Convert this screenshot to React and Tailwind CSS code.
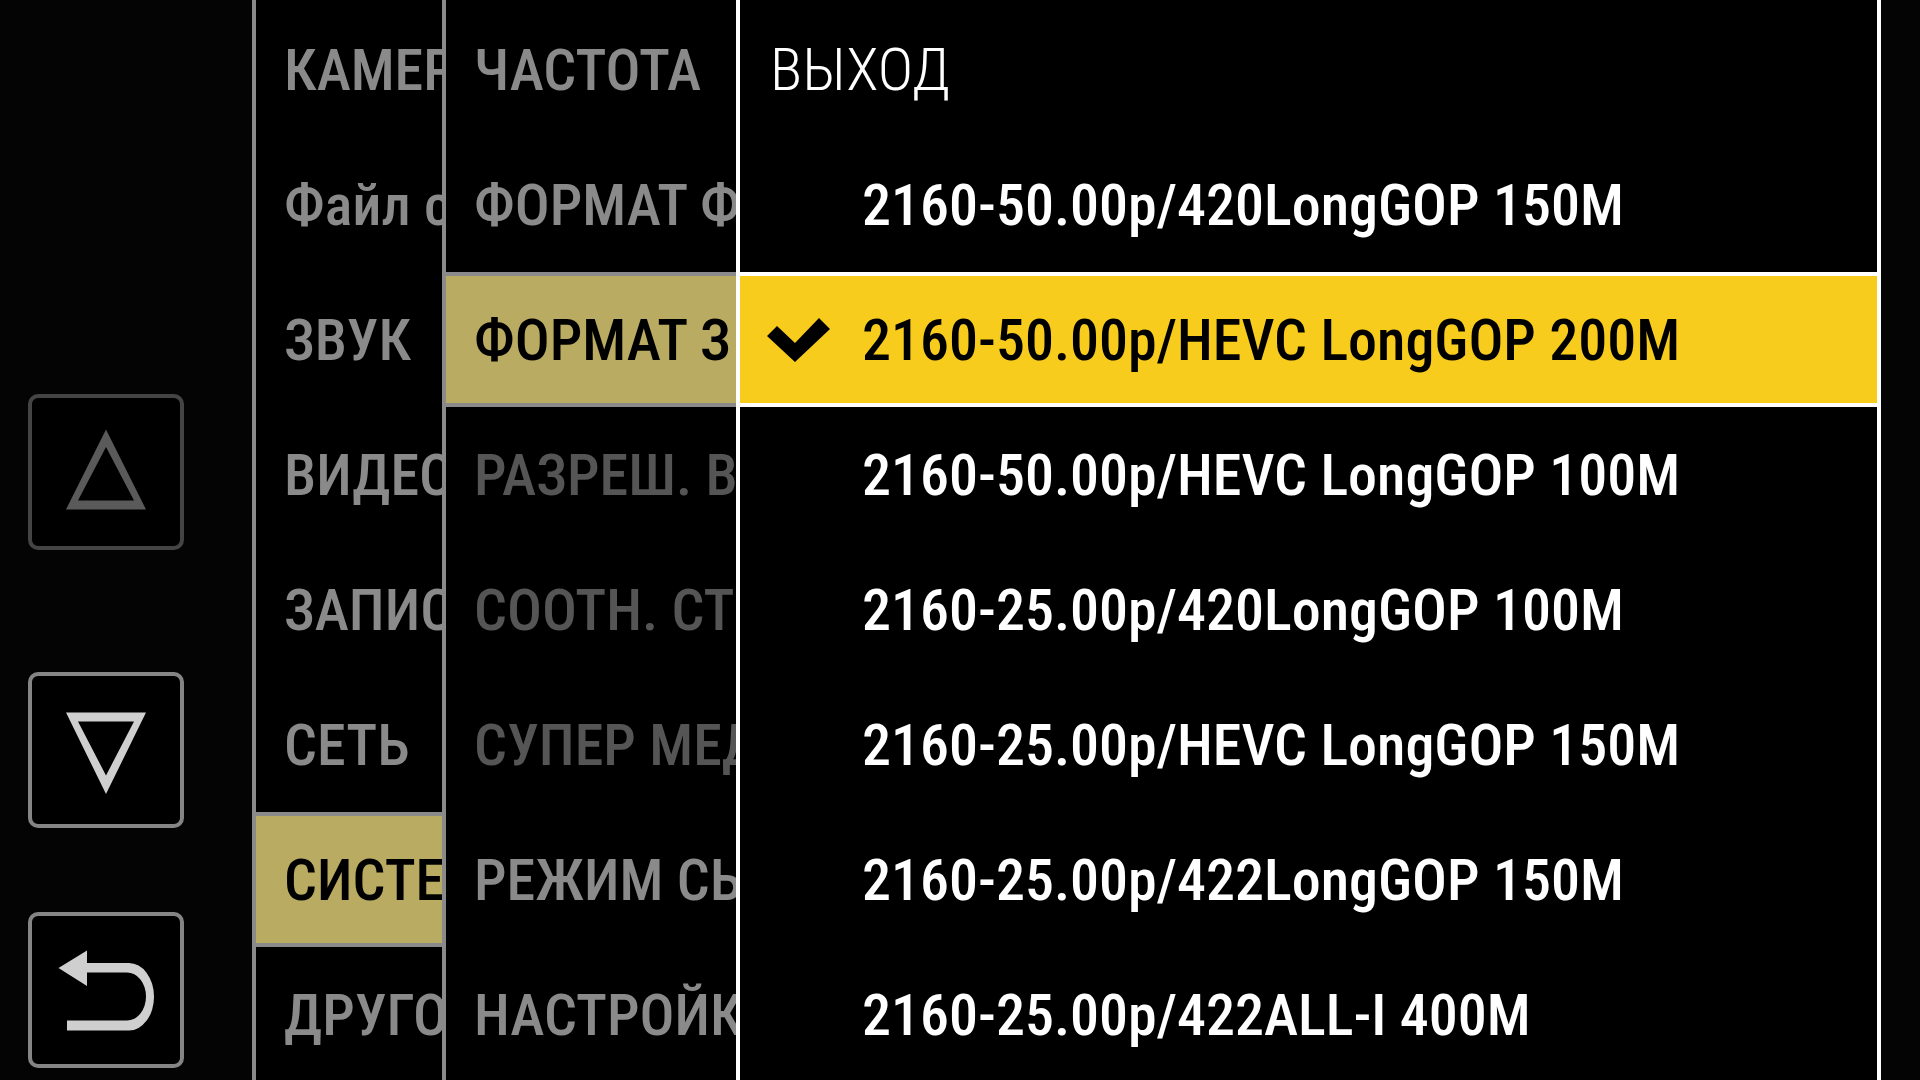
import { useState } from "react";
import clsx from "clsx";

const SECTIONS = ["КАМЕР", "Файл с", "ЗВУК", "ВИДЕО", "ЗАПИС", "СЕТЬ", "СИСТЕМ", "ДРУГО"];

const SETTINGS = [
  { label: "ЧАСТОТА" },
  { label: "ФОРМАТ Ф" },
  { label: "ФОРМАТ З" },
  { label: "РАЗРЕШ. В", disabled: true },
  { label: "СООТН. СТО", disabled: true },
  { label: "СУПЕР МЕД", disabled: true },
  { label: "РЕЖИМ СЫ" },
  { label: "НАСТРОЙКА" }
];

const FORMATS = [
  "2160-50.00p/420LongGOP 150M",
  "2160-50.00p/HEVC LongGOP 200M",
  "2160-50.00p/HEVC LongGOP 100M",
  "2160-25.00p/420LongGOP 100M",
  "2160-25.00p/HEVC LongGOP 150M",
  "2160-25.00p/422LongGOP 150M",
  "2160-25.00p/422ALL-I 400M"
];

const UpIcon = () => (
  <svg viewBox="4 4 148 148" className="w-full h-full" fill="currentColor" fillRule="evenodd" aria-hidden="true">
    <path d="M78 35.5 118 115.5H38ZM78 53 50 106.5H106Z" />
  </svg>
);

const DownIcon = () => (
  <svg viewBox="4 4 148 148" className="w-full h-full" fill="currentColor" fillRule="evenodd" aria-hidden="true">
    <path d="M78 122 118 40.5H38ZM78 103.5 50 49.5H106Z" />
  </svg>
);

const BackIcon = () => (
  <svg viewBox="4 4 148 148" className="w-full h-full" fill="currentColor" aria-hidden="true">
    <path d="M30.5 56 59 38.5V51H101A25 33.7 0 0 1 101 118.5H39V108.5H99A19 24 0 0 0 99 60.5H59V74Z" />
  </svg>
);

const CheckIcon = () => (
  <svg viewBox="0 0 64 44" className="w-16 h-11" fill="currentColor" aria-hidden="true">
    <path d="M1 18 11 8 29 25 53 0 64 11 29 44Z" />
  </svg>
);

const SideButton = ({ label, disabled, onClick, children }) => (
  <button
    type="button"
    aria-label={label}
    disabled={disabled}
    onClick={onClick}
    className="size-[156px] rounded-[10px] border-4 border-[#858585] bg-black text-[#cfcfcf] disabled:border-[#444444] disabled:text-[#5a5a5a]"
  >
    {children}
  </button>
);

const MenuItem = ({ label, selected, disabled, onClick }) => (
  <button
    type="button"
    disabled={disabled}
    onClick={onClick}
    className={clsx(
      "h-[135px] shrink-0 border-y-4 pl-7 text-left whitespace-nowrap disabled:text-[#555555]",
      selected ? "border-[#8a8a8a] bg-[#b9ab62] text-black" : "border-transparent text-[#8a8a8a]"
    )}
  >
    {label}
  </button>
);

export default function App() {
  const [section, setSection] = useState(6);
  const [setting, setSetting] = useState(2);
  const [format, setFormat] = useState(1);
  const [page, setPage] = useState(0);

  return (
    <main className="flex h-screen overflow-hidden bg-[#040405] font-['Roboto_Condensed','Roboto',sans-serif] text-[58px] leading-none font-medium">
      <aside className="flex w-[252px] shrink-0 flex-col justify-end pb-3 pl-7">
        <div className="mb-[122px] flex">
          <SideButton label="Вверх" disabled={page === 0} onClick={() => setPage(page - 1)}>
            <UpIcon />
          </SideButton>
        </div>
        <div className="mb-[84px] flex">
          <SideButton label="Вниз" onClick={() => setPage(page + 1)}>
            <DownIcon />
          </SideButton>
        </div>
        <SideButton label="Назад" onClick={() => setPage(0)}>
          <BackIcon />
        </SideButton>
      </aside>

      <nav className="flex w-[190px] shrink-0 flex-col overflow-hidden border-l-4 border-[#8a8a8a] bg-black pt-0.5">
        {SECTIONS.map((label, i) => (
          <MenuItem key={label} label={label} selected={i === section} onClick={() => setSection(i)} />
        ))}
      </nav>

      <nav className="flex w-[294px] shrink-0 flex-col overflow-hidden border-l-4 border-[#8a8a8a] bg-black pt-0.5">
        {SETTINGS.map((item, i) => (
          <MenuItem
            key={item.label}
            label={item.label}
            disabled={item.disabled}
            selected={i === setting}
            onClick={() => setSetting(i)}
          />
        ))}
      </nav>

      <section className="mr-[39px] flex min-w-0 flex-1 flex-col overflow-hidden border-x-4 border-white bg-black pt-0.5 text-white">
        <h1 className="flex h-[135px] shrink-0 items-center pl-[30px] text-[60px] leading-none font-light">ВЫХОД</h1>
        {FORMATS.map((label, i) => (
          <button
            key={label}
            type="button"
            aria-pressed={i === format}
            onClick={() => setFormat(i)}
            className={clsx(
              "flex h-[135px] shrink-0 items-center gap-8 border-y-4 pl-[26px] text-left whitespace-nowrap",
              i === format ? "border-white bg-[#f8cc1c] text-black" : "border-transparent"
            )}
          >
            <span className="w-16 shrink-0">{i === format ? <CheckIcon /> : null}</span>
            {label}
          </button>
        ))}
      </section>
    </main>
  );
}
